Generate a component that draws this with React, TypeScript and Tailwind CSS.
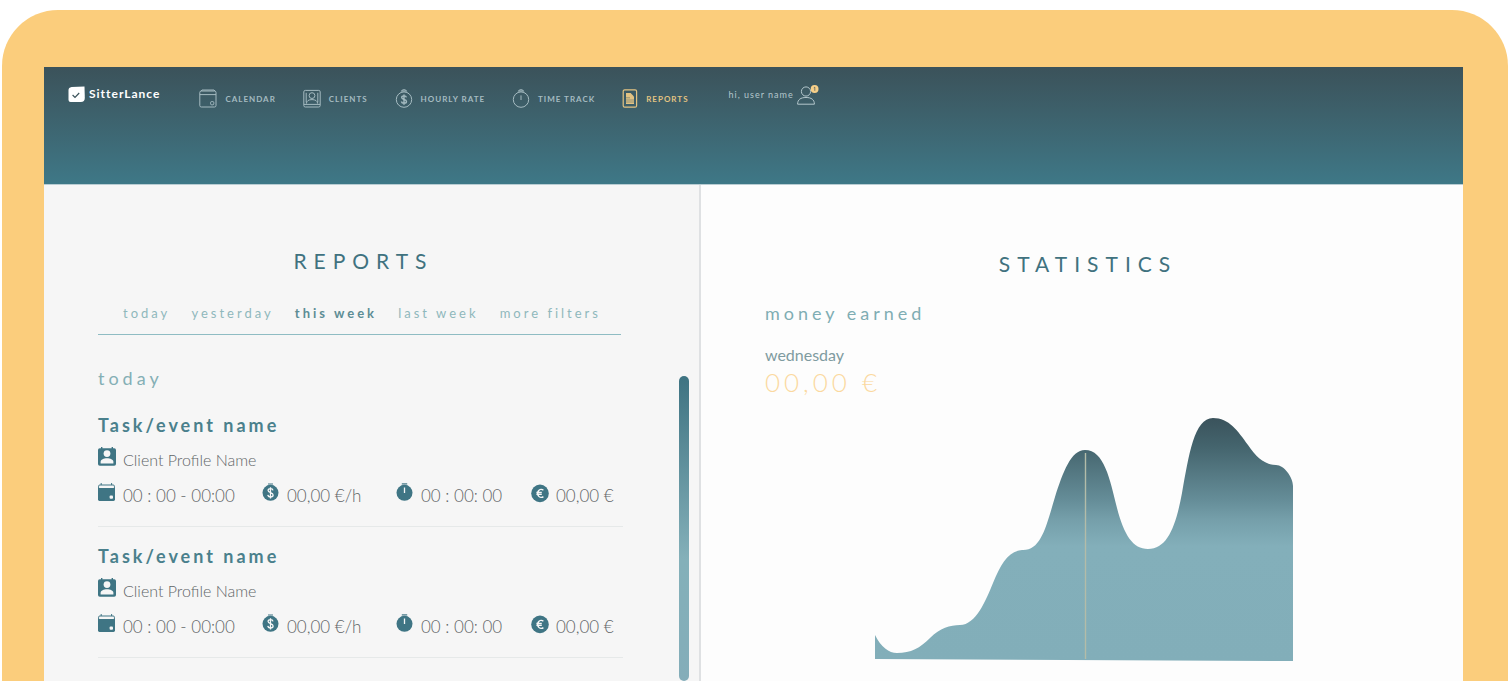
import { useState } from 'react';

const filters = ['today', 'yesterday', 'this week', 'last week', 'more filters'];

const tasks = [
  { id: 1, name: 'Task/event name', client: 'Client Profile Name', hours: '00 : 00 - 00:00', rate: '00,00 €/h', tracked: '00 : 00: 00', total: '00,00 €' },
  { id: 2, name: 'Task/event name', client: 'Client Profile Name', hours: '00 : 00 - 00:00', rate: '00,00 €/h', tracked: '00 : 00: 00', total: '00,00 €' },
];

/* Outlined icons for the top bar */
const outline = {
  className: 'h-[19px] w-[18px] shrink-0',
  viewBox: '0 0 18 19',
  fill: 'none',
  stroke: 'currentColor',
  strokeWidth: 1,
};

function CalendarOutline() {
  return (
    <svg {...outline}>
      <rect x="0.8" y="2" width="16.2" height="16" rx="1.5" />
      <path d="M0.8 5.6h16.2M1.8 2.4 3 1h12l1.4 1.4" />
      <rect x="11.6" y="12.6" width="3.2" height="3.2" rx="1" />
    </svg>
  );
}

function ClientOutline() {
  return (
    <svg {...outline}>
      <rect x="0.8" y="1.4" width="16.4" height="16.6" rx="1.5" />
      <circle cx="9" cy="6.6" r="2.9" />
      <path d="M3.4 14.6c0-2.8 2.4-4 5.6-4s5.6 1.2 5.6 4M3.2 3.8v9.6M14.8 3.8v9.6M1 15.4h16" />
    </svg>
  );
}

function RateOutline() {
  return (
    <svg {...outline}>
      <circle cx="9" cy="10.6" r="7.7" />
      <path d="M6.4 2.4 7.6.8h2.8l1.2 1.6M6.4 2h5.2" />
      <path d="M11.4 8.4c-.2-1-1.1-1.5-2.4-1.5s-2.3.6-2.3 1.7c0 2.5 4.8 1.2 4.8 3.9 0 1.1-1 1.8-2.5 1.8s-2.4-.7-2.6-1.8M9 5.4v10.4" strokeWidth="1.4" />
    </svg>
  );
}

function TimerOutline() {
  return (
    <svg {...outline}>
      <circle cx="9" cy="10.6" r="7.7" />
      <path d="M6.4 2.4 7.6.8h2.8l1.2 1.6M6.4 2h5.2M9 6.4v4.6" />
    </svg>
  );
}

function ReportOutline() {
  return (
    <svg {...outline} className="h-[19px] w-4 shrink-0" viewBox="0 0 16 19">
      <rect x="1.2" y="0.8" width="13.4" height="17.4" rx="1.5" strokeWidth="1.2" />
      <path d="M4 4h4.6L12 7.4V15H4z" fill="currentColor" stroke="none" />
      <path d="M4 8.8h4M4 11h8M4 13h8" stroke="#3d5f69" strokeWidth="0.5" />
    </svg>
  );
}

/* Filled icons for the report rows */
const solid = {
  className: 'h-5 w-[18px] shrink-0 text-[#3f7584]',
  viewBox: '0 0 18 20',
  fill: 'currentColor',
};

function ClientSolid() {
  return (
    <svg {...solid}>
      <path d="M3 0h1.4v1.2h9.2V0H15v1.2h1.2A1.8 1.8 0 0 1 18 3v14a1.8 1.8 0 0 1-1.8 1.8H1.8A1.8 1.8 0 0 1 0 17V3a1.8 1.8 0 0 1 1.8-1.8H3z" />
      <circle cx="9" cy="6.6" r="3.4" fill="#f6f6f6" />
      <path d="M2.6 16.4v-1.6c0-2.2 3.2-3.5 6.4-3.5s6.4 1.3 6.4 3.5v1.6z" fill="#f6f6f6" />
    </svg>
  );
}

function CalendarSolid() {
  return (
    <svg {...solid}>
      <path d="M.6 5V3.2Q.6 2 1.8 2h13.4q1.2 0 1.2 1.2V5M3.2 0v2M13.6 0v2" fill="none" stroke="currentColor" strokeWidth="1" />
      <path d="M0 5h17v11.6a1.4 1.4 0 0 1-1.4 1.4H1.4A1.4 1.4 0 0 1 0 16.6z" />
      <rect x="11.6" y="12.4" width="3.4" height="3.4" rx="1" fill="#f6f6f6" />
    </svg>
  );
}

function RateSolid() {
  return (
    <svg {...solid}>
      <path d="M6 .5h5v1H6z" />
      <circle cx="8.5" cy="9.8" r="8" />
      <path d="M11 7.4c-.2-1.1-1.1-1.7-2.5-1.7S6.1 6.3 6.1 7.5c0 2.7 5 1.6 5 4.4 0 1.2-1 2-2.6 2s-2.5-.8-2.7-2M8.5 4.2v11.4" fill="none" stroke="#f6f6f6" strokeWidth="1.3" />
    </svg>
  );
}

function TimerSolid() {
  return (
    <svg {...solid}>
      <path d="M5.8 .3h5.4v1.2H5.8z" />
      <circle cx="8.5" cy="9.8" r="8" />
      <path d="M8.5 4.5v5.5" stroke="#f6f6f6" strokeWidth="1.3" />
    </svg>
  );
}

function EuroSolid() {
  return (
    <svg {...solid}>
      <circle cx="9" cy="10.4" r="8.8" />
      <path d="M12.4 7.2a3.6 4 0 1 0 0 6.4M5.4 9.5h5.4M5.4 11.4h5.4" fill="none" stroke="#f6f6f6" strokeWidth="1.4" />
    </svg>
  );
}

const navItems = [
  { label: 'CALENDAR', icon: CalendarOutline },
  { label: 'CLIENTS', icon: ClientOutline },
  { label: 'HOURLY RATE', icon: RateOutline },
  { label: 'TIME TRACK', icon: TimerOutline },
  { label: 'REPORTS', icon: ReportOutline, active: true },
];

function Header() {
  return (
    <header className="flex h-[117px] items-start bg-linear-to-b from-[#3b525a] to-[#3e7887] pl-6 pt-[18px]">
      <a href="#" className="flex items-center gap-1 text-white">
        <svg className="h-[17px] w-[17px]" viewBox="0 0 17 17">
          <path d="M3.6 1 16.5.6 16.8 12q0 4-4 4H2.5Q.6 16 .5 14V4q0-2.4 3.1-3z" fill="#fff" />
          <path d="m4.6 9 2.4 2.4 4.2-4.4" fill="none" stroke="#3b525a" strokeWidth="1.2" />
        </svg>
        <span className="text-[12px] leading-[18px] font-bold tracking-[1px]">SitterLance</span>
      </a>
      <nav className="ml-[39px] mt-[4px] flex gap-[27px]">
        {navItems.map(({ label, icon: Icon, active }) => (
          <a
            key={label}
            href="#"
            className={`flex items-center gap-2 text-[8px] leading-[18px] font-bold tracking-[1px] ${active ? 'text-[#e3c382]' : 'text-[#a5bbc1]'}`}
          >
            <Icon />
            {label}
          </a>
        ))}
      </nav>
      <a href="#" className="ml-10 flex items-center gap-[3px] text-[#b4c7cc]">
        <span className="text-[9px] leading-[18px] tracking-[1px]">hi, user name</span>
        <svg className="h-[20px] w-[22px]" viewBox="0 0 22 20" fill="none" stroke="currentColor">
          <circle cx="9" cy="6.5" r="4.6" />
          <path d="M.6 19.2c0-4.6 3-6.7 8.4-6.7s8.4 2.1 8.4 6.7z" />
          <circle cx="17.6" cy="4" r="3.9" fill="#f6cf88" stroke="none" />
          <path d="M16.8 2.8l1-.6v3.6" stroke="#3b525a" strokeWidth="0.7" />
        </svg>
      </a>
    </header>
  );
}

function TaskCard({ task }: { task: (typeof tasks)[number] }) {
  return (
    <li className="border-b border-[#e6e9e9] pb-[18px] leading-6 font-light text-[#5f6567]">
      <h3 className="text-[18px] font-bold tracking-[3px] text-[#4a808c]">{task.name}</h3>
      <div className="mt-[10px] flex items-start gap-[7px]">
        <ClientSolid />
        <span className="pt-[1px] text-[16px]">{task.client}</span>
      </div>
      <div className="mt-[11px] grid grid-cols-[164px_134px_135px_1fr] text-[17px]">
        <div className="flex items-start gap-[7px]">
          <CalendarSolid />
          <span className="pt-[1px]">{task.hours}</span>
        </div>
        <div className="flex items-start gap-[7px]">
          <RateSolid />
          <span className="pt-[1px]">{task.rate}</span>
        </div>
        <div className="flex items-start gap-[7px]">
          <TimerSolid />
          <span className="pt-[1px]">{task.tracked}</span>
        </div>
        <div className="flex items-start gap-[7px]">
          <EuroSolid />
          <span className="pt-[1px]">{task.total}</span>
        </div>
      </div>
    </li>
  );
}

function Reports() {
  const [selected, setSelected] = useState('this week');

  return (
    <section className="flex flex-col border-r-2 border-[#dfe1e3] bg-[#f6f6f6] pl-[54px] pt-[60px]">
      <div className="mr-[78px]">
        <h1 className="pl-2 text-center text-[21px] leading-8 tracking-[7px] text-[#40727f]">REPORTS</h1>
        <div className="mt-6 flex justify-between border-b border-[#8fbcc3] pr-[20px] pb-[9px] pl-[25px]">
          {filters.map((filter) => (
            <button
              key={filter}
              onClick={() => setSelected(filter)}
              className={`text-[13px] leading-6 tracking-[3px] ${filter === selected ? 'font-bold text-[#5d8d95]' : 'text-[#8fb8bc]'}`}
            >
              {filter}
            </button>
          ))}
        </div>
      </div>
      <div className="mt-[31px] flex flex-1 pr-[10px]">
        <div className="flex-1">
          <h2 className="text-[18px] leading-6 tracking-[4px] text-[#84afb5]">today</h2>
          <ul className="mt-[23px] flex flex-col gap-[17px]">
            {tasks.map((task) => (
              <TaskCard key={task.id} task={task} />
            ))}
          </ul>
        </div>
        <div className="ml-[56px] mt-[10px] w-[10px] rounded-full bg-linear-to-b from-[#3e7382] via-[#84b0b9] via-60% to-[#84adb9]" />
      </div>
    </section>
  );
}

function EarningsChart() {
  return (
    <svg className="mx-auto mt-[20px] h-[244px] w-[418px]" viewBox="0 0 418 244" role="img" aria-label="money earned">
      <defs>
        <linearGradient id="earnings" gradientUnits="userSpaceOnUse" x1="0" y1="0" x2="0" y2="244">
          <stop offset="0" stopColor="#3a525b" />
          <stop offset="0.12" stopColor="#44646d" />
          <stop offset="0.34" stopColor="#658d98" />
          <stop offset="0.42" stopColor="#759faa" />
          <stop offset="0.53" stopColor="#83afba" />
          <stop offset="1" stopColor="#82aeb9" />
        </linearGradient>
      </defs>
      <path
        d="M0 218C6 230 14 236 22 236C36 236 45 231 55 221C65 211 75 208 85 208C101 208 111 183 118 166C126 146 134 134 147 133C166 134 171 110 180 80C188 55 196 33 210 33C229 33 235 62 242 91C249 118 258 132 273 132C293 132 301 108 307 76C314 38 319 1 338 1C354 1 363 14 373 28C381 40 390 48 401 48C409 48 418 60 418 69V244L0 242Z"
        fill="url(#earnings)"
      />
      <path d="M210.5 36V242" stroke="#b3bca9" strokeWidth="1.4" />
    </svg>
  );
}

function Statistics() {
  return (
    <section className="bg-[#fdfdfd] pl-1 pt-[63px]">
      <h1 className="pl-2 text-center text-[21px] leading-8 tracking-[7px] text-[#40727f]">STATISTICS</h1>
      <div className="ml-[60px] mt-[21px]">
        <h2 className="text-[18px] leading-6 tracking-[4px] text-[#7fadb3]">money earned</h2>
        <p className="mt-[18px] text-[16px] leading-6 text-[#7f9ba0]">wednesday</p>
        <p className="text-[26px] leading-[30px] font-light tracking-[4px] text-[#fbd9a0]">00,00 €</p>
      </div>
      <EarningsChart />
    </section>
  );
}

export default function App() {
  return (
    <div className="flex min-h-screen flex-col bg-white px-[2px] pt-[10px] font-['Lato',sans-serif]">
      <div className="flex flex-1 flex-col rounded-t-[56px] bg-[#fbcd7c] pt-[57px] pr-[45px] pl-[42px]">
        <Header />
        <main className="grid flex-1 grid-cols-[25fr_29fr] border-t border-[#b9cdd3]">
          <Reports />
          <Statistics />
        </main>
      </div>
    </div>
  );
}
